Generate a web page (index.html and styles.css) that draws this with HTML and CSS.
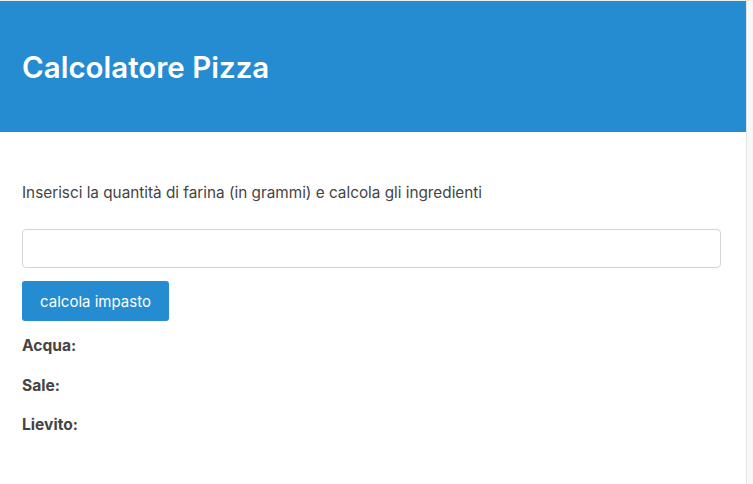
FILE: index.html
```html
<!DOCTYPE html>
<html lang="it">
<head>
<meta charset="utf-8">
<title>Calcolatore Pizza</title>
<link rel="stylesheet" href="styles.css">
</head>
<body>
<div class="page">
  <header class="hero">
    <h1 class="title">Calcolatore Pizza</h1>
  </header>
  <main class="content">
    <p class="intro">Inserisci la quantità di farina (in grammi) e calcola gli ingredienti</p>
    <input class="field" type="text">
    <button class="btn">calcola impasto</button>
    <p class="result">Acqua:</p>
    <p class="result">Sale:</p>
    <p class="result">Lievito:</p>
  </main>
</div>
<div class="track"></div>
</body>
</html>
```
FILE: styles.css
```css
html, body {
  margin: 0;
  height: 100%;
}
body {
  display: flex;
  border-top: 1px solid #ececec;
  box-sizing: border-box;
  font-family: Inter, "Noto Sans", sans-serif;
  color: #444;
  background: #fff;
  overflow: hidden;
}
.page {
  flex: 1;
  min-width: 0;
}
.track {
  width: 6px;
  border-left: 1px solid #e4e4e4;
  background: #f8f8f8;
}
.hero {
  height: 131px;
  background: #258cd2;
  display: flex;
  align-items: center;
  padding-left: 22px;
}
.title {
  margin: 0;
  color: #fff;
  font-size: 29.5px;
  font-weight: 600;
  line-height: 38px;
  letter-spacing: 0;
}
.content {
  padding: 0 25px 0 22px;
  display: flex;
  flex-direction: column;
  align-items: flex-start;
}
.intro {
  margin: 50px 0 0;
  font-size: 15.3px;
  line-height: 22px;
  color: #444;
}
.field {
  margin-top: 25px;
  width: 100%;
  box-sizing: border-box;
  height: 39px;
  border: 1px solid #d4d4d4;
  border-radius: 4px;
  padding: 0 10px;
  font: inherit;
  font-size: 15px;
}
.btn {
  margin-top: 13px;
  height: 40px;
  width: 147px;
  padding: 0;
  border: none;
  border-radius: 3px;
  background: #258cd2;
  color: #fff;
  font-family: inherit;
  font-size: 15px;
}
.result {
  margin: 14px 0 0;
  font-size: 15.6px;
  line-height: 22px;
  font-weight: 700;
  color: #444;
}
.result + .result {
  margin-top: 17.5px;
}
```
